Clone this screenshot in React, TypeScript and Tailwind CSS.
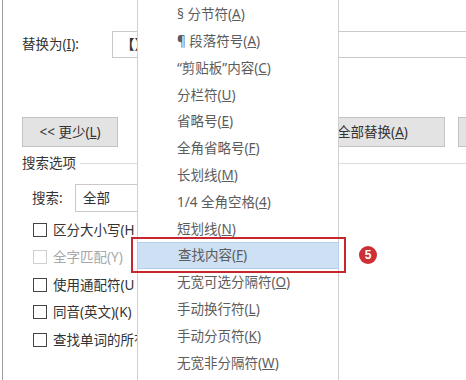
import React from "react";

type Item = { pre: string; key: string };

const ITEMS: Item[] = [
  { pre: "§ 分节符(", key: "A" },
  { pre: "¶ 段落符号(", key: "A" },
  { pre: "“剪贴板”内容(", key: "C" },
  { pre: "分栏符(", key: "U" },
  { pre: "省略号(", key: "E" },
  { pre: "全角省略号(", key: "F" },
  { pre: "长划线(", key: "M" },
  { pre: "1/4 全角空格(", key: "4" },
  { pre: "短划线(", key: "N" },
  { pre: "查找内容(", key: "F" },
  { pre: "无宽可选分隔符(", key: "O" },
  { pre: "手动换行符(", key: "L" },
  { pre: "手动分页符(", key: "K" },
  { pre: "无宽非分隔符(", key: "W" },
];

const OPTIONS = [
  { label: "区分大小写(H", off: false },
  { label: "全字匹配(Y)", off: true },
  { label: "使用通配符(U", off: false },
  { label: "同音(英文)(K)", off: false },
  { label: "查找单词的所有形式", off: false },
];

function Btn({ children, className }: { children?: React.ReactNode; className?: string }) {
  return (
    <div
      className={
        "h-[30px] shrink-0 flex items-center justify-center bg-[#e3e3e3] border border-[#c4c4c4] text-[#333] " +
        (className ?? "")
      }
    >
      {children}
    </div>
  );
}

export default function App() {
  return (
    <div className="relative w-[466px] h-[380px] overflow-hidden bg-white text-[13.5px] font-['Noto_Sans','Noto_Sans_CJK_SC',sans-serif]">
      {/* dialog behind the menu */}
      <div className="pl-[2px] h-full">
        <div className="h-full w-[640px] border-l border-[#9c9c9c] pl-[19px] pt-[31px] text-[#333]">
          <div className="flex items-center h-[27px]">
            <span className="w-[90px] shrink-0">
              替换为(<u>I</u>):
            </span>
            <div className="h-[27px] flex-1 border border-[#c9c9c9] flex items-center pl-[8px] font-bold">【】</div>
          </div>

          <div className="flex mt-[59px]">
            <Btn className="w-[96px]">
              {"<< 更少("}
              <u>L</u>)
            </Btn>
            <Btn className="w-[145px] ml-[182px]">
              全部替换(<u>A</u>)
            </Btn>
            <Btn className="w-[110px] ml-[13px]" />
          </div>

          <div className="flex items-center h-[20px] mt-[6px]">
            <span>搜索选项</span>
            <div className="flex-1 h-px bg-[#dcdcdc] ml-[4px]" />
          </div>

          <div className="flex items-center h-[28px] mt-[11px] pl-[10px]">
            <span className="w-[43px] shrink-0">搜索:</span>
            <div className="h-[28px] w-[200px] border border-[#c9c9c9] flex items-center pl-[7px]">全部</div>
          </div>

          <div className="mt-[4px] pl-[11px]">
            {OPTIONS.map((o) => (
              <div key={o.label} className="flex items-center h-[27.5px]">
                <div
                  className={
                    "w-[14px] h-[14px] border shrink-0 " + (o.off ? "border-[#cfcfcf]" : "border-[#444]")
                  }
                />
                <span className={"ml-[6px] whitespace-nowrap " + (o.off ? "text-[#a8a8a8]" : "")}>{o.label}</span>
              </div>
            ))}
          </div>
        </div>
      </div>

      {/* special characters menu */}
      <div className="absolute left-[137px] top-0 w-[202px] h-full bg-white border-x border-[#cfcfcf] pt-[1px] text-[#5c5c5c]">
        {ITEMS.map((it, i) => (
          <div
            key={i}
            className={
              "h-[26.8px] flex items-center pl-[39px] whitespace-nowrap " +
              (i === 9 ? "bg-[#cde0f4] border border-[#b4cfee] -mx-px pl-[40px]" : "")
            }
          >
            {it.pre}
            <u>{it.key}</u>)
          </div>
        ))}
      </div>

      {/* annotation */}
      <div className="absolute left-[131px] top-[237px] w-[215px] h-[36px] border-2 border-[#c7262f]" />
      <div className="absolute left-[359px] top-[246px] w-[18px] h-[18px] rounded-full bg-[#cc2f36] flex items-center justify-center text-white text-[12px] font-bold font-['Liberation_Sans',sans-serif]">
        5
      </div>
    </div>
  );
}
